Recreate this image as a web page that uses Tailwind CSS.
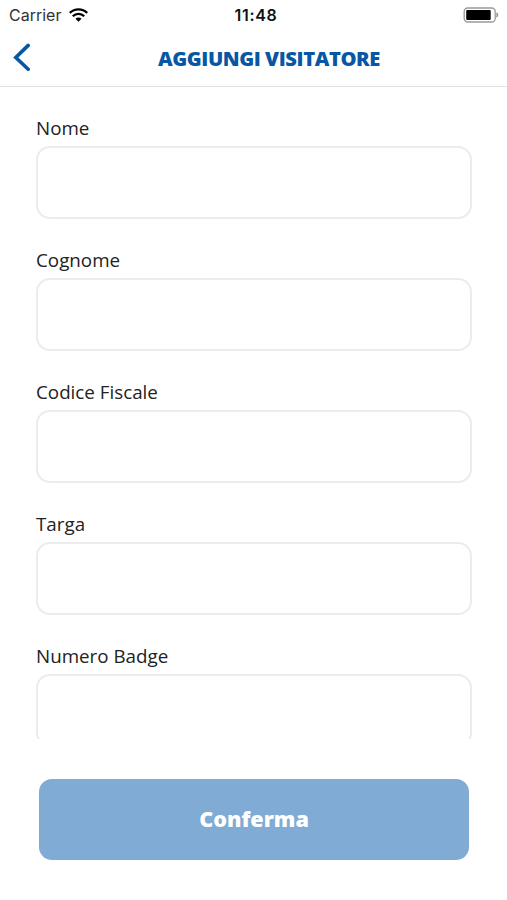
<!DOCTYPE html>
<html lang="it"><head><meta charset="utf-8"><title>Aggiungi visitatore</title>
<script src="https://cdn.jsdelivr.net/npm/@tailwindcss/browser@4"></script></head>
<body class="bg-white">
<div class="w-[507px] h-[900px] overflow-hidden flex flex-col bg-white font-['Open_Sans',sans-serif]">
<div class="h-[30px] shrink-0 grid grid-cols-3 items-center pl-[9px] pr-[8px] text-[#333] font-['Inter',sans-serif]">
<div class="flex items-center gap-[8px] text-[16px] leading-[30px]"><span>Carrier</span>
<svg class="w-[19px] h-[14px]" viewBox="0 0 19 14" fill="none" stroke="#000" stroke-width="2.3"><path d="M.8 4.9a12.3 12.3 0 0 1 17.4 0M3.8 8.2a8 8 0 0 1 11.4 0"/><path d="M6.5 10.7a4.2 4.2 0 0 1 6 0L9.5 13.8z" fill="#000" stroke="none"/></svg></div>
<div class="text-center text-[16px] font-semibold leading-[30px] tracking-[0.7px] pl-[4px] text-[#111]">11:48</div>
<svg class="w-[36px] h-[16px] justify-self-end" viewBox="0 0 36 16"><rect x="1.2" y="1" width="31" height="14" rx="3.5" fill="none" stroke="#999" stroke-width="1.3"/><rect x="3.2" y="3" width="24.5" height="10" rx="1"/><path d="M33.8 5.7q2.4 2.2 0 4.6z" fill="#888" stroke="#888" stroke-width=".6"/></svg>
</div>
<header class="h-[57px] shrink-0 border-b border-[#e2e2e2] relative flex items-center justify-center pl-[31px]">
<svg class="absolute left-[13px] top-[13px] w-[18px] h-[29px]" viewBox="0 0 18 29" fill="none" stroke="#0757a5" stroke-width="3.6" stroke-linecap="round"><path d="M15.2 2.4 2.8 14.5 15.2 26.2"/></svg>
<h1 class="text-[20.2px] leading-[28px] tracking-[-0.42px] font-extrabold text-[#0757a5] whitespace-nowrap">AGGIUNGI VISITATORE</h1>
</header>
<main class="h-[652px] shrink-0 overflow-hidden px-[36px] pt-[27px] text-[18.8px] leading-[28px] text-[#222]">
<label class="block h-[132.1px]">Nome<span class="mt-[4px] block w-[436px] h-[73px] border-2 border-[#ececec] rounded-[14px]"></span></label>
<label class="block h-[132.1px]">Cognome<span class="mt-[4px] block w-[436px] h-[73px] border-2 border-[#ececec] rounded-[14px]"></span></label>
<label class="block h-[132.1px]">Codice Fiscale<span class="mt-[4px] block w-[436px] h-[73px] border-2 border-[#ececec] rounded-[14px]"></span></label>
<label class="block h-[132.1px]">Targa<span class="mt-[4px] block w-[436px] h-[73px] border-2 border-[#ececec] rounded-[14px]"></span></label>
<label class="block h-[132.1px]">Numero Badge<span class="mt-[4px] block w-[436px] h-[73px] border-2 border-[#ececec] rounded-[14px]"></span></label>
</main>
<button class="mt-[39.5px] ml-[39px] w-[430px] h-[81px] pt-px shrink-0 rounded-[13px] bg-[#80abd4] text-white text-[21.6px] font-extrabold">Conferma</button>
</div></body></html>
